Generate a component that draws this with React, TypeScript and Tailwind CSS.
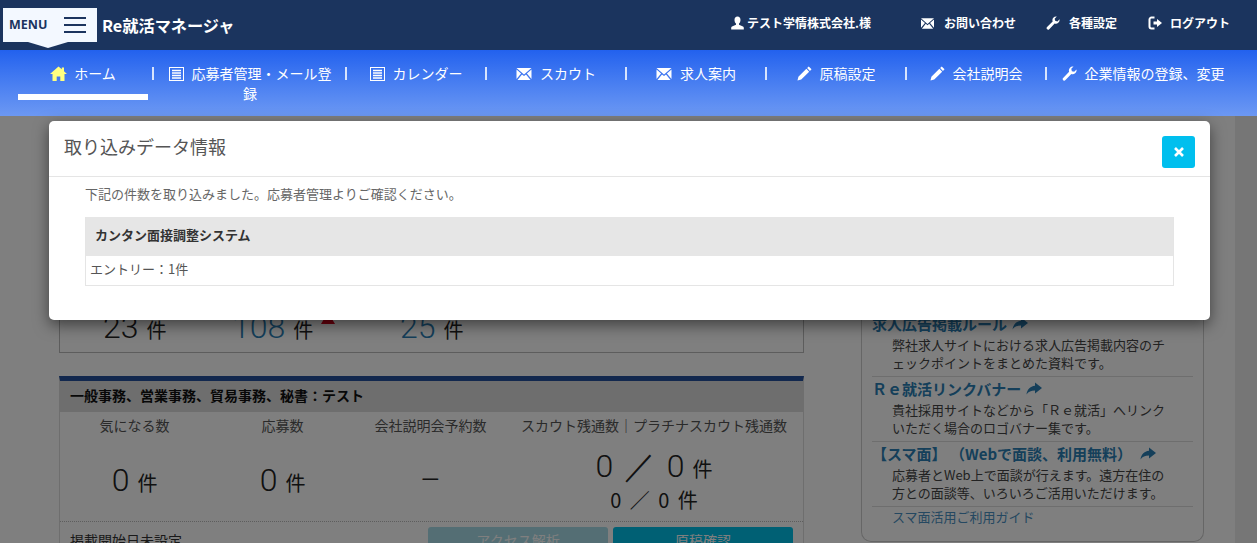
const jp = "font-['Noto_Sans_CJK_JP','Noto_Sans',sans-serif]";

const ListIcon = () => (
  <svg width="15" height="14" viewBox="0 0 15 14" className="inline-block align-[-2px]">
    <rect x="0.5" y="0.5" width="14" height="13" fill="none" stroke="#fff" />
    <path d="M3 3.5h9M3 6h9M3 8.5h9M3 11h9" stroke="#fff" strokeWidth="1.4" />
  </svg>
);

const MailIcon = ({ w = 16, h = 12 }: { w?: number; h?: number }) => (
  <svg width={w} height={h} viewBox="0 0 15 12" className="inline-block shrink-0 align-[-1px]">
    <path d="M0 0h15L7.5 6.5z M0 1.5v9.5l4.6-5.6z M15 1.5v9.5l-4.6-5.6z M1 12l4.5-5.6 2 1.7 2-1.7L14 12z" fill="#fff" />
  </svg>
);

const HomeIcon = () => (
  <svg width="17" height="15" viewBox="0 0 17 15" className="inline-block align-[-2px]">
    <path d="M8.5 0.5L0 8h2.5v7h4.2v-4.5h3.6V15h4.2V8H17l-3-2.7V1.5h-2.2v1.8z" fill="#ffff80" />
  </svg>
);

const PencilIcon = () => (
  <svg width="15" height="15" viewBox="0 0 16 16" className="inline-block align-[-2px]">
    <path d="M12.5 0.5l3 3-1.7 1.7-3-3z M10 3l3 3-8.5 8.5L0.5 15.500l1-4z" fill="#fff" />
  </svg>
);

const WrenchIcon = ({ size = 15 }: { size?: number }) => (
  <svg width={size} height={size} viewBox="0 0 16 16" className="inline-block shrink-0 align-[-2px]">
    <path d="M15.500 3.800a4.300 4.300 0 0 1-5.600 4.700L3.700 15a1.600 1.600 0 0 1-2.500-2.300L7.600 6.200A4.300 4.300 0 0 1 12.300 0.500L9.900 3l0.600 2.500 2.500 0.700z" fill="#fff" />
  </svg>
);

const UserIcon = () => (
  <svg width="13" height="14" viewBox="0 0 13 14" className="shrink-0">
    <path d="M6.500 0.500c1.900 0 3 1.500 3 3.400 0 1.500-0.700 3-1.500 3.600v1.300l4 1.700c0.500 0.300 0.800 0.800 0.800 1.400V13.500H0.200V11.900c0-0.600 0.300-1.100 0.800-1.400l4-1.700V7.500C4.200 6.900 3.500 5.400 3.500 3.900c0-1.900 1.100-3.400 3-3.400z" fill="#fff" />
  </svg>
);

const LogoutIcon = () => (
  <svg width="14" height="14" viewBox="0 0 14 14" className="shrink-0">
    <path d="M6.500 1.500H3.500a2 2 0 0 0-2 2v7a2 2 0 0 0 2 2h3" fill="none" stroke="#fff" strokeWidth="2" />
    <path d="M5.500 5.500h3.500V3l5 4-5 4V8.500H5.500z" fill="#fff" />
  </svg>
);

const ShareIcon = () => (
  <svg width="16" height="13" viewBox="0 0 16 13" className="shrink-0">
    <path d="M9 0.500l7 5.500-7 5.500V8.500C5 8.500 2.500 9.500 0.500 12.500 1 8 4 4.200 9 3.800z" fill="currentColor" />
  </svg>
);

const navItems = [
  { label: "ホーム", icon: <HomeIcon />, cls: "w-[134px] pr-[4px]", gap: "mr-[7px]", active: true },
  { label: "応募者管理・メール登録", icon: <ListIcon />, cls: "w-[193px] pl-[13px] pr-[10px]", gap: "mr-[8px]" },
  { label: "カレンダー", icon: <ListIcon />, cls: "w-[140px] pl-[2px]", gap: "mr-[8px]" },
  { label: "スカウト", icon: <MailIcon />, cls: "w-[140px] pl-[2px]", gap: "mr-[8px]" },
  { label: "求人案内", icon: <MailIcon />, cls: "w-[140px] pl-[2px]", gap: "mr-[8px]" },
  { label: "原稿設定", icon: <PencilIcon />, cls: "w-[140px] pl-[2px]", gap: "mr-[8px]" },
  { label: "会社説明会", icon: <PencilIcon />, cls: "w-[140px] pl-[2px]", gap: "mr-[8px]" },
  { label: "企業情報の登録、変更", icon: <WrenchIcon />, cls: "w-[196px]", gap: "mr-[8px]" },
];

const Num = ({ children, className }: { children: string; className?: string }) => (
  <span className={`font-['Roboto',sans-serif] text-[32px] font-light leading-[40px] ${className ?? ""}`}>{children}</span>
);

const Stat = ({ label, value, className }: { label: string; value: string; className: string }) => (
  <div className={`flex flex-col items-center ${className}`}>
    <div className="text-[14px] leading-5 text-[#555]">{label}</div>
    <div className="mt-[25px] text-[#222]">
      <Num>{value}</Num>
      {value !== "–" && <span className="ml-2 text-[20px]">件</span>}
    </div>
  </div>
);

const Guide = ({ title, lines, indent }: { title: string; lines: string[]; indent?: string }) => (
  <div className="border-b border-[#ddd] pb-[4px] last:border-b-0">
    <div className={`flex items-center gap-[5px] text-[15px] font-bold leading-[23px] text-[#2a7fb5] ${indent ?? ""}`}>
      {title}
      <ShareIcon />
    </div>
    {lines.map((l) => (
      <div key={l} className="pl-[20px] pt-px text-[13px] leading-[18px] text-[#444] last:pt-0">
        {l}
      </div>
    ))}
  </div>
);

export default function App() {
  return (
    <div className={`relative h-[543px] w-[1257px] overflow-hidden bg-white ${jp}`}>
      <header className="relative z-20 flex h-[50px] items-center bg-[#1b345e] text-white">
        <div className="relative ml-[3px] flex h-[34px] w-[94px] items-center bg-[#f3f8ff] pl-[6px] text-[#1b345e]">
          <span className="font-['Noto_Sans',sans-serif] text-[12.5px] font-bold">MENU</span>
          <svg width="22" height="16" viewBox="0 0 22 16" className="ml-[17px]">
            <path d="M0 1h22M0 8h22M0 15h22" stroke="#1b345e" strokeWidth="2" />
          </svg>
          <div className="absolute left-[25px] top-[34px] h-0 w-0 border-x-[20px] border-t-[6px] border-x-transparent border-t-[#f3f8ff]" />
        </div>
        <div className="ml-[5px] text-[16.2px] font-bold">Re就活マネージャ</div>
        <div className="ml-auto flex items-center pb-[4px] text-[12px] font-bold">
          <div className="flex items-center gap-[3px]">
            <UserIcon />
            テスト学情株式会社.様
          </div>
          <div className="ml-[50px] flex items-center gap-[10px]">
            <MailIcon w={13} h={11} />
            お問い合わせ
          </div>
          <div className="ml-[30px] flex items-center gap-[9px]">
            <WrenchIcon size={14} />
            各種設定
          </div>
          <div className="ml-[31px] mr-[27px] flex items-center gap-[8px]">
            <LogoutIcon />
            ログアウト
          </div>
        </div>
      </header>

      <nav className="relative z-20 flex h-[66px] bg-gradient-to-b from-[#2261ee] to-[#6c98f3] pl-[18px] text-white">
        {navItems.map((item, i) => (
          <div key={item.label} className={`relative shrink-0 pt-[13px] text-center text-[14px] leading-[20px] ${item.cls}`}>
            {i > 0 && <span className="absolute left-0 top-[17px] h-[13px] w-[2px] bg-white/80" />}
            <span className={item.gap}>{item.icon}</span>
            {item.label}
            {item.active && <div className="absolute left-0 top-[44px] h-[6px] w-[130px] bg-white" />}
          </div>
        ))}
      </nav>

      <main className="flex h-[427px] border-r-[22px] border-[#ececec] bg-white pl-[59px] pt-[10px]">
        <div className="w-[745px]">
          <section className="h-[227px] border border-[#bbb] px-[43px] pt-[180px]">
            <div className="flex text-[#222]">
              <div className="w-[129px]">
                <Num>23</Num>
                <span className="ml-2 text-[20px]">件</span>
              </div>
              <div className="relative w-[168px] text-[#2a7fb5]">
                <Num>108</Num>
                <span className="ml-2 text-[20px] text-[#222]">件</span>
                <span className="absolute left-[89px] top-[5px] h-0 w-0 border-x-[7px] border-b-[12px] border-x-transparent border-b-[#d9001b]" />
              </div>
              <div className="text-[#2a7fb5]">
                <Num>25</Num>
                <span className="ml-2 text-[20px] text-[#222]">件</span>
              </div>
            </div>
          </section>
          <section className="mt-[23px] border-x border-[#ddd] border-t-[5px] border-t-[#24509c]">
            <div className="flex h-[31px] items-center bg-[#ddd] px-[10px] pb-[3px] text-[14px] font-bold text-[#111]">
              一般事務、営業事務、貿易事務、秘書：テスト
            </div>
            <div className="flex h-[110px] border-b border-dotted border-[#bbb] pt-[3px]">
              <Stat label="気になる数" value="0" className="w-[149px]" />
              <Stat label="応募数" value="0" className="w-[147px]" />
              <Stat label="会社説明会予約数" value="–" className="w-[149px]" />
              <div className="flex w-[298px] flex-col items-center text-[#222]">
                <div className="text-[14px] leading-5 text-[#555]">スカウト残通数｜プラチナスカウト残通数</div>
                <div className="mt-[11px] leading-[40px]">
                  <Num className="[word-spacing:3px]">0 ／ 0</Num>
                  <span className="ml-[8px] text-[20px]">件</span>
                </div>
                <div className="mt-[-3px] text-[20px] leading-[26px] [word-spacing:4px]">0 ／ 0 件</div>
              </div>
            </div>
            <div className="flex items-start px-[10px] pt-[5px]">
              <span className="text-[14px] leading-[26px] text-[#333]">掲載開始日未設定</span>
              <div className="ml-auto flex gap-[5px]">
                <div className="h-[24px] w-[180px] rounded-t-[3px] bg-[#a8dde8] text-center text-[14px] leading-[26px] text-white">アクセス解析</div>
                <div className="h-[24px] w-[180px] rounded-t-[3px] bg-[#00c0e8] text-center text-[14px] leading-[26px] text-white">原稿確認</div>
              </div>
            </div>
          </section>
        </div>
        <aside className="ml-[57px] h-[427px] w-[343px] -translate-y-[10px] self-start">
          <div className="mt-[196px] h-[230px] rounded-b-[10px] border border-t-0 border-[#ccc] px-[10px]">
            <Guide title="求人広告掲載ルール" lines={["弊社求人サイトにおける求人広告掲載内容のチ", "ェックポイントをまとめた資料です。"]} />
            <Guide title="Ｒｅ就活リンクバナー" lines={["貴社採用サイトなどから「Ｒｅ就活」へリンク", "いただく場合のロゴバナー集です。"]} />
            <Guide title="【スマ面】 （Webで面談、利用無料）" indent="gap-[8px]" lines={["応募者とWeb上で面談が行えます。遠方在住の", "方との面談等、いろいろご活用いただけます。"]} />
            <div className="pl-[20px] text-[13px] leading-5 text-[#4a90c2]">スマ面活用ご利用ガイド</div>
          </div>
        </aside>
      </main>

      {/* modal backdrop */}
      <div className="absolute inset-x-0 bottom-0 top-[116px] z-10 bg-black/50" />

      <div className="absolute left-[49px] top-[121px] z-30 h-[199px] w-[1161px] rounded-[5px] bg-white shadow-[0_5px_15px_rgba(0,0,0,0.5)]">
        <div className="relative h-[56px] border-b border-[#e5e5e5] pl-[15px] pt-[12px] text-[18px] leading-[26px] text-[#555]">
          取り込みデータ情報
          <button className="absolute right-[15px] top-[15px] flex h-[32px] w-[33px] items-center justify-center rounded-[3px] bg-[#00bfee] text-white">
            <svg width="10" height="10" viewBox="0 0 10 10">
              <path d="M1 1l8 8M9 1l-8 8" stroke="#fff" strokeWidth="2.6" />
            </svg>
          </button>
        </div>
        <div className="px-[36px] pt-[7px]">
          <p className="text-[13px] leading-[20px] text-[#666]">下記の件数を取り込みました。応募者管理よりご確認ください。</p>
          <div className="mt-[13px] border-x border-b border-[#e5e5e5]">
            <div className="flex h-[39px] items-center bg-[#e6e6e6] px-[9px] pb-[4px] text-[13px] font-bold text-[#333]">カンタン面接調整システム</div>
            <div className="flex h-[29px] items-center px-[4px] pb-[4px] text-[13px] text-[#555]">エントリー：1件</div>
          </div>
        </div>
      </div>
    </div>
  );
}
